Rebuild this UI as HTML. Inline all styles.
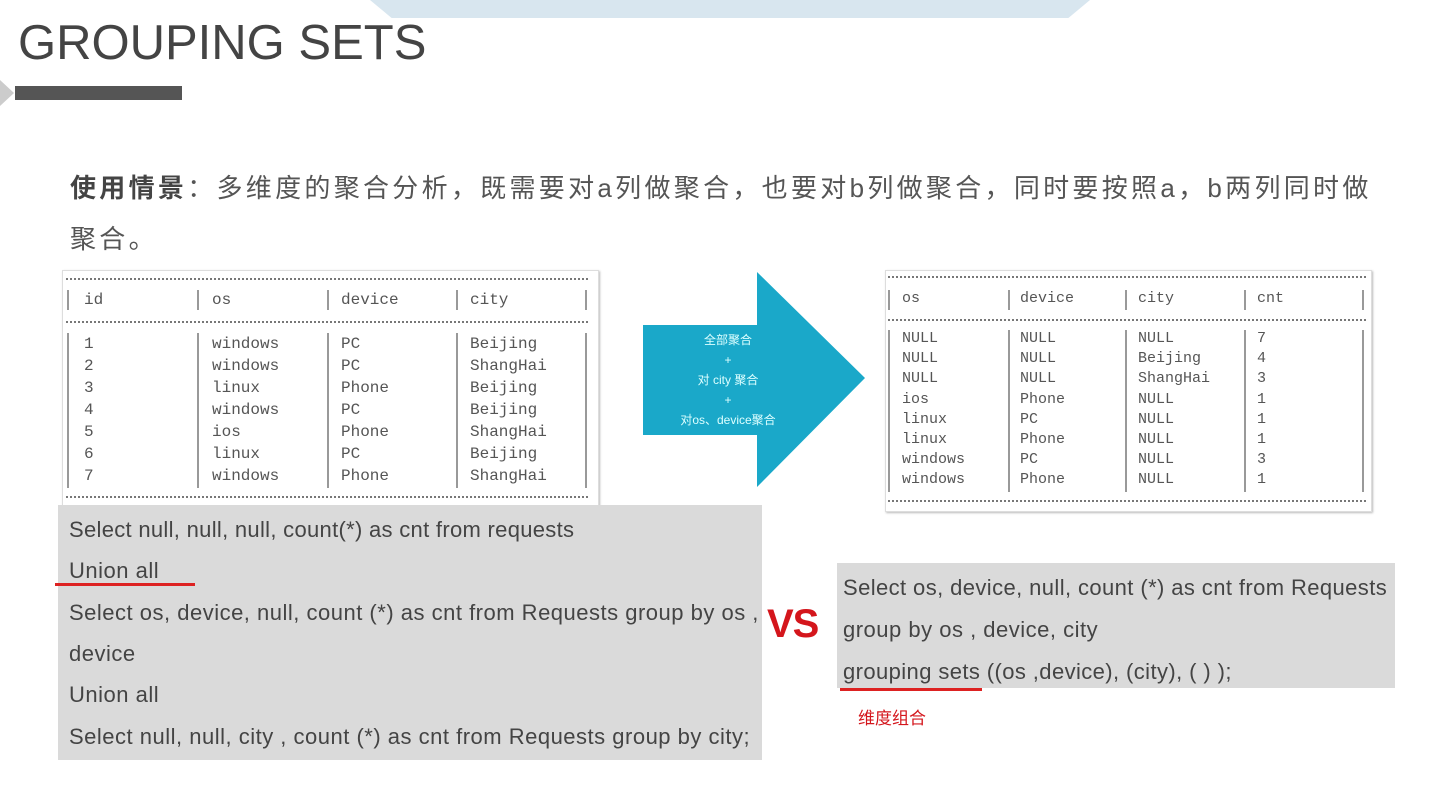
<!DOCTYPE html>
<html><head><meta charset="utf-8"><style>
body{margin:0;width:1445px;height:799px;overflow:hidden;background:#fff;position:relative;font-family:"Liberation Sans","Noto Sans CJK SC",sans-serif}
.a{position:absolute;white-space:nowrap}
.m{font-family:"Liberation Mono","DejaVu Sans Mono",monospace;font-size:16px;color:#555;line-height:20px}
.d{position:absolute;border-top:2px dotted #777;height:0}
.p{position:absolute;width:2px;background:#999}
.c{font-size:22px;color:#444;letter-spacing:0.5px;line-height:24px}
</style></head><body>
<div class="a" style="left:370px;top:0;width:720px;height:18px;background:#d8e6ef;clip-path:polygon(0 0,100% 0,97% 100%,3% 100%)"></div>
<div class="a" style="left:18px;top:15px;font-size:49px;color:#444;letter-spacing:0px">GROUPING SETS</div>
<div class="a" style="left:0;top:80px;width:14px;height:26px;background:#ccc;clip-path:polygon(0 0,100% 50%,0 100%)"></div>
<div class="a" style="left:15px;top:86px;width:167px;height:14px;background:#555"></div>
<div class="a" style="left:70px;top:163px;font-size:26px;color:#555;line-height:51px;letter-spacing:3.3px"><b style="color:#444">使用情景</b>：多维度的聚合分析，既需要对a列做聚合，也要对b列做聚合，同时要按照a，b两列同时做<br>聚合。</div>

<!-- left table -->
<div class="a" style="left:62px;top:270px;width:535px;height:236px;border:1px solid #ddd;box-shadow:1px 1px 2px #bbb"></div>
<div class="d" style="left:66px;top:278px;width:522px"></div>
<div class="d" style="left:66px;top:321px;width:522px"></div>
<div class="d" style="left:66px;top:496px;width:522px"></div>
<div class="p" style="left:67px;top:290px;height:20px"></div><div class="p" style="left:197px;top:290px;height:20px"></div><div class="p" style="left:327px;top:290px;height:20px"></div><div class="p" style="left:456px;top:290px;height:20px"></div><div class="p" style="left:585px;top:290px;height:20px"></div>
<div class="p" style="left:67px;top:333px;height:155px"></div><div class="p" style="left:197px;top:333px;height:155px"></div><div class="p" style="left:327px;top:333px;height:155px"></div><div class="p" style="left:456px;top:333px;height:155px"></div><div class="p" style="left:585px;top:333px;height:155px"></div>
<div class="a m" style="left:84px;top:290px">id</div><div class="a m" style="left:212px;top:290px">os</div><div class="a m" style="left:341px;top:290px">device</div><div class="a m" style="left:470px;top:290px">city</div>
<div class="a m" style="left:84px;top:333px;line-height:22px">1<br>2<br>3<br>4<br>5<br>6<br>7</div>
<div class="a m" style="left:212px;top:333px;line-height:22px">windows<br>windows<br>linux<br>windows<br>ios<br>linux<br>windows</div>
<div class="a m" style="left:341px;top:333px;line-height:22px">PC<br>PC<br>Phone<br>PC<br>Phone<br>PC<br>Phone</div>
<div class="a m" style="left:470px;top:333px;line-height:22px">Beijing<br>ShangHai<br>Beijing<br>Beijing<br>ShangHai<br>Beijing<br>ShangHai</div>

<!-- arrow -->
<svg class="a" style="left:640px;top:268px" width="230" height="224"><polygon points="3,57 117,57 117,4 225,110 117,219 117,167 3,167" fill="#1aa8c9"/></svg>
<div class="a" style="left:643px;top:330px;width:170px;text-align:center;color:#dff;font-size:12px;line-height:20px">全部聚合<br>+<br>对 city 聚合<br>+<br>对os、device聚合</div>

<!-- right table -->
<div class="a" style="left:885px;top:270px;width:485px;height:240px;border:1px solid #ddd;box-shadow:1px 1px 2px #bbb"></div>
<div class="d" style="left:888px;top:276px;width:478px"></div>
<div class="d" style="left:888px;top:319px;width:478px"></div>
<div class="d" style="left:888px;top:500px;width:478px"></div>
<div class="p" style="left:888px;top:290px;height:20px"></div><div class="p" style="left:1008px;top:290px;height:20px"></div><div class="p" style="left:1125px;top:290px;height:20px"></div><div class="p" style="left:1244px;top:290px;height:20px"></div><div class="p" style="left:1362px;top:290px;height:20px"></div>
<div class="p" style="left:888px;top:330px;height:162px"></div><div class="p" style="left:1008px;top:330px;height:162px"></div><div class="p" style="left:1125px;top:330px;height:162px"></div><div class="p" style="left:1244px;top:330px;height:162px"></div><div class="p" style="left:1362px;top:330px;height:162px"></div>
<div class="a m" style="left:902px;top:289px;font-size:15px">os</div><div class="a m" style="left:1020px;top:289px;font-size:15px">device</div><div class="a m" style="left:1138px;top:289px;font-size:15px">city</div><div class="a m" style="left:1257px;top:289px;font-size:15px">cnt</div>
<div class="a m" style="left:902px;top:329px;font-size:15px;line-height:20.2px">NULL<br>NULL<br>NULL<br>ios<br>linux<br>linux<br>windows<br>windows</div>
<div class="a m" style="left:1020px;top:329px;font-size:15px;line-height:20.2px">NULL<br>NULL<br>NULL<br>Phone<br>PC<br>Phone<br>PC<br>Phone</div>
<div class="a m" style="left:1138px;top:329px;font-size:15px;line-height:20.2px">NULL<br>Beijing<br>ShangHai<br>NULL<br>NULL<br>NULL<br>NULL<br>NULL</div>
<div class="a m" style="left:1257px;top:329px;font-size:15px;line-height:20.2px">7<br>4<br>3<br>1<br>1<br>1<br>3<br>1</div>

<!-- left code box -->
<div class="a" style="left:58px;top:505px;width:704px;height:255px;background:#dadada"></div>
<div class="a c" style="left:69px;top:518px;letter-spacing:0.3px">Select null, null, null, count(*) as cnt from requests</div>
<div class="a c" style="left:69px;top:559px">Union all</div>
<div class="a c" style="left:69px;top:601px">Select os, device, null, count (*) as cnt from Requests group by os ,</div>
<div class="a c" style="left:69px;top:642px">device</div>
<div class="a c" style="left:69px;top:683px">Union all</div>
<div class="a c" style="left:69px;top:725px">Select null, null, city , count (*) as cnt from Requests group by city;</div>
<div class="a" style="left:55px;top:583px;width:140px;height:3px;background:#d22"></div>
<div class="a" style="left:767px;top:602px;font-size:40px;font-weight:bold;color:#d4161c;letter-spacing:-1px">VS</div>

<!-- right code box -->
<div class="a" style="left:837px;top:563px;width:558px;height:125px;background:#dadada"></div>
<div class="a c" style="left:843px;top:576px;letter-spacing:0.4px">Select os, device, null, count (*) as cnt from Requests</div>
<div class="a c" style="left:843px;top:618px">group by os , device, city</div>
<div class="a c" style="left:843px;top:660px;letter-spacing:0.4px">grouping sets ((os ,device), (city), ( ) );</div>
<div class="a" style="left:840px;top:688px;width:142px;height:3px;background:#d22"></div>
<div class="a" style="left:858px;top:704px;font-size:17px;color:#d4161c">维度组合</div>
</body></html>
